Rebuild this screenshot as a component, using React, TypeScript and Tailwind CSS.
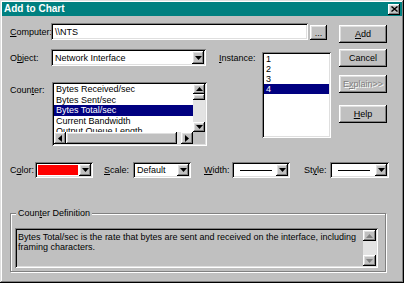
import React from "react";

const sunken =
  "shadow-[inset_1px_1px_#808080,inset_-1px_-1px_#ffffff,inset_2px_2px_#000000,inset_-2px_-2px_#dfdfdf]";
const raised =
  "shadow-[inset_-1px_-1px_#000000,inset_1px_1px_#ffffff,inset_-2px_-2px_#808080,inset_2px_2px_#dfdfdf]";

function Tri({ dir, color = "#000" }: { dir: "up" | "down" | "left" | "right"; color?: string }) {
  if (dir === "down")
    return (
      <svg width="7" height="4" viewBox="0 0 7 4">
        <polygon points="0,0 7,0 3.5,4" fill={color} />
      </svg>
    );
  if (dir === "up")
    return (
      <svg width="7" height="4" viewBox="0 0 7 4">
        <polygon points="0,4 7,4 3.5,0" fill={color} />
      </svg>
    );
  if (dir === "left")
    return (
      <svg width="4" height="7" viewBox="0 0 4 7">
        <polygon points="4,0 4,7 0,3.5" fill={color} />
      </svg>
    );
  return (
    <svg width="4" height="7" viewBox="0 0 4 7">
      <polygon points="0,0 0,7 4,3.5" fill={color} />
    </svg>
  );
}

function ArrowBtn({ dir, className = "", color }: { dir: "up" | "down" | "left" | "right"; className?: string; color?: string }) {
  return (
    <div className={`flex items-center justify-center bg-[#c0c0c0] ${raised} ${className}`}>
      <Tri dir={dir} color={color} />
    </div>
  );
}

function Combo({ w, h = "h-[17px]", children }: { w: string; h?: string; children: React.ReactNode }) {
  return (
    <div className={`flex bg-white p-[2px] ${sunken} ${w} ${h}`}>
      <div className="flex flex-1 items-center overflow-hidden">{children}</div>
      <ArrowBtn dir="down" className="w-[12px] h-full" />
    </div>
  );
}

function Button({ children, className = "", disabled = false }: { children: React.ReactNode; className?: string; disabled?: boolean }) {
  return (
    <div
      className={`flex w-[48px] h-[18px] items-center justify-center bg-[#c0c0c0] ${raised} ${
        disabled ? "text-[#808080] [text-shadow:1px_1px_#ffffff]" : "text-black"
      } ${className}`}
    >
      {children}
    </div>
  );
}

export default function App() {
  const counters = [
    "Bytes Received/sec",
    "Bytes Sent/sec",
    "Bytes Total/sec",
    "Current Bandwidth",
    "Output Queue Length",
  ];
  return (
    <div
      className="w-[404px] h-[283px] bg-[#c0c0c0] p-[2px] flex flex-col text-[9px] leading-[10px] text-black shadow-[inset_-1px_-1px_#000000,inset_1px_1px_#dfdfdf,inset_-2px_-2px_#808080,inset_2px_2px_#ffffff] overflow-hidden"
      style={{ fontFamily: '"Liberation Sans", Arial, sans-serif' }}
    >
      {/* Title bar */}
      <div className="flex h-[14px] items-center justify-between bg-[#008080] pl-[2px] pr-[2px]">
        <span className="text-[10px] font-bold text-white leading-[12px]">Add to Chart</span>
        <div className={`flex w-[12px] h-[11px] items-center justify-center bg-[#c0c0c0] ${raised}`}>
          <svg width="7" height="6" viewBox="0 0 7 6">
            <path d="M0.5 0.5 L6.5 5.5 M6.5 0.5 L0.5 5.5" stroke="#000" strokeWidth="1.4" />
          </svg>
        </div>
      </div>

      {/* Top section */}
      <div className="flex pl-[8px] pt-[7px]">
        <div className="flex w-[329px] flex-col">
          {/* Computer row */}
          <div className="flex h-[17px] items-center">
            <span className="w-[41px]">
              <u>C</u>omputer:
            </span>
            <div className={`flex h-[17px] w-[257px] items-center bg-white pl-[4px] ${sunken}`}>\\NTS</div>
            <div className={`ml-[2px] flex h-[15px] w-[17px] self-end items-center justify-center bg-[#c0c0c0] ${raised}`}>
              <span className="leading-[8px]">...</span>
            </div>
          </div>

          {/* Object / Counter + Instance */}
          <div className="mt-[9px] flex items-start">
            <div className="flex w-[197px] flex-col">
              <div className="flex h-[17px] items-center">
                <span className="w-[41px]">
                  O<u>b</u>ject:
                </span>
                <Combo w="w-[155px]">
                  <span className="pl-[2px]">Network Interface</span>
                </Combo>
              </div>
              <div className="mt-[16px] flex items-start">
                <span className="w-[42px] pt-[3px]">
                  Coun<u>t</u>er:
                </span>
                <div className={`flex h-[64px] w-[155px] flex-col bg-white p-[2px] ${sunken}`}>
                  <div className="flex flex-1 overflow-hidden">
                    <div className="flex flex-1 flex-col overflow-hidden">
                      {counters.map((c, i) => (
                        <div
                          key={c}
                          className={`h-[10.5px] shrink-0 pl-[2px] leading-[10.5px] whitespace-nowrap ${
                            i === 2 ? "bg-[#000080] text-white" : ""
                          }`}
                        >
                          {c}
                        </div>
                      ))}
                    </div>
                    <div className="flex w-[12px] flex-col bg-[#e3e3e3]">
                      <ArrowBtn dir="up" className="h-[10px] w-[12px]" />
                      <div className={`h-[6px] w-[12px] bg-[#c0c0c0] ${raised}`} />
                      <div className="flex-1" />
                      <ArrowBtn dir="down" className="h-[10px] w-[12px]" />
                    </div>
                  </div>
                  <div className="flex h-[12px]">
                    <div className="flex flex-1 bg-[#e3e3e3]">
                      <ArrowBtn dir="left" className="h-[12px] w-[12px]" />
                      <div className={`h-[12px] w-[111px] bg-[#c0c0c0] ${raised}`} />
                      <div className="flex-1" />
                      <ArrowBtn dir="right" className="h-[12px] w-[12px]" />
                    </div>
                    <div className="w-[12px] bg-[#c0c0c0]" />
                  </div>
                </div>
              </div>
            </div>

            <div className="flex pl-[12px] items-start">
              <span className="flex h-[17px] w-[43px] items-center">
                <u>I</u>nstance:
              </span>
              <div className={`mt-[3px] flex h-[86px] w-[69px] flex-col bg-white p-[2px] ${sunken}`}>
                {["1", "2", "3", "4"].map((n) => (
                  <div
                    key={n}
                    className={`h-[10px] pl-[2px] leading-[10px] ${n === "4" ? "bg-[#000080] text-white" : ""}`}
                  >
                    {n}
                  </div>
                ))}
              </div>
            </div>
          </div>
        </div>

        {/* Buttons */}
        <div className="flex w-[48px] flex-col pt-[2px]">
          <Button>
            <u>A</u>dd
          </Button>
          <Button className="mt-[6px]">Cancel</Button>
          <Button className="mt-[8px]" disabled>
            E<u>x</u>plain&gt;&gt;
          </Button>
          <Button className="mt-[12px]">
            <u>H</u>elp
          </Button>
        </div>
      </div>

      {/* Color row */}
      <div className="mt-[16px] flex h-[16px] items-center pl-[8px]">
        <span className="w-[25px]">
          C<u>o</u>lor:
        </span>
        <Combo w="w-[58px]" h="h-[16px]">
          <div className="ml-[1px] h-[10px] w-[40px] bg-[#ff0000]" />
        </Combo>
        <span className="ml-[11px] w-[29px]">
          <u>S</u>cale:
        </span>
        <Combo w="w-[58px]" h="h-[16px]">
          <span className="pl-[2px]">Default</span>
        </Combo>
        <span className="ml-[13px] w-[28px]">
          <u>W</u>idth:
        </span>
        <Combo w="w-[58px]" h="h-[16px]">
          <div className="ml-[6px] h-[1px] w-[32px] bg-black" />
        </Combo>
        <span className="ml-[14px] w-[26px]">
          St<u>y</u>le:
        </span>
        <Combo w="w-[59px]" h="h-[16px]">
          <div className="ml-[6px] h-[1px] w-[32px] bg-black" />
        </Combo>
      </div>

      {/* Counter Definition group */}
      <div className="relative ml-[8px] mt-[35px] h-[59px] w-[376px] border border-[#808080] shadow-[inset_1px_1px_#ffffff,1px_1px_#ffffff]">
        <span className="absolute left-[5px] top-[-6px] bg-[#c0c0c0] px-[2px]">
          Coun<u>t</u>er Definition
        </span>
        <div className={`ml-[4px] mt-[14px] flex h-[40px] w-[363px] bg-[#c0c0c0] p-[2px] ${sunken}`}>
          <div className="flex-1 pl-[1px] pt-[2px] leading-[10px]">
            Bytes Total/sec is the rate that bytes are sent and received on the interface, including
            <br />
            framing characters.
          </div>
          <div className="flex w-[13px] flex-col bg-[#e3e3e3]">
            <ArrowBtn dir="up" className="h-[11px] w-[13px]" color="#808080" />
            <div className="flex-1" />
            <ArrowBtn dir="down" className="h-[11px] w-[13px]" color="#808080" />
          </div>
        </div>
      </div>
    </div>
  );
}
